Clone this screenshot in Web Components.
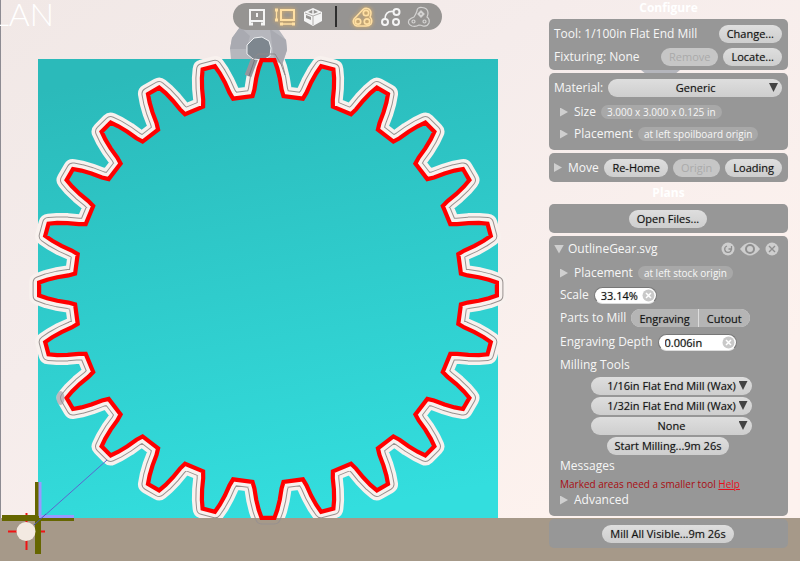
<!DOCTYPE html>
<html lang="en">
<head>
<meta charset="utf-8">
<title>Mill planner</title>
<style>
  html, body { margin: 0; min-height: 100%; }
  body { font: 12px/16px "Open Sans", "Noto Sans", sans-serif; background: #f5edea; color: #fff; }
</style>
</head>
<body>
<mill-app></mill-app>
<script>
const define = (name, html, setup) => {
  const template = document.createElement('template');
  template.innerHTML = html;
  customElements.define(name, class extends HTMLElement {
    connectedCallback() {
      if (this.shadowRoot) return;
      this.attachShadow({ mode: 'open' }).append(template.content.cloneNode(true));
      if (setup) setup(this, this.shadowRoot);
    }
  });
};

/* 24-tooth gear outline centred on the stock */
const gearPath = () => {
  const profile = [[-4.6, 193.5], [-3.9, 200], [-3.2, 211], [-2.4, 221], [-1.6, 229], [1.6, 229], [2.4, 221], [3.2, 211], [3.9, 200], [4.6, 193.5]];
  const points = [];
  for (let tooth = 0; tooth < 24; tooth++) {
    for (const [offset, radius] of profile) {
      const angle = (tooth * 15 + offset) * Math.PI / 180;
      points.push((268 + radius * Math.sin(angle)).toFixed(1) + ' ' + (289 - radius * Math.cos(angle)).toFixed(1));
    }
  }
  return 'M' + points.join('L') + 'Z';
};

define('mill-scene', `
<style>
  :host { display: block; min-width: 0; min-height: 0; }
  svg { display: block; width: 100%; height: 100%; }
</style>
<svg viewBox="0 0 800 561" preserveAspectRatio="xMinYMin slice" aria-label="Stock preview" role="img">
  <defs>
    <linearGradient id="wall" x1="0" y1="0" x2="1" y2="1">
      <stop offset="0" stop-color="#f1e8e6"/><stop offset=".35" stop-color="#f5eceb"/><stop offset=".8" stop-color="#fdf2ee"/><stop offset="1" stop-color="#fdf2ee"/>
    </linearGradient>
    <linearGradient id="stock" gradientUnits="userSpaceOnUse" x1="220" y1="59" x2="300" y2="518">
      <stop offset="0" stop-color="#2bbaba"/><stop offset="1" stop-color="#33dede"/>
    </linearGradient>
    <clipPath id="above"><rect width="800" height="518"/></clipPath>
    <clipPath id="below"><rect y="518" width="800" height="43"/></clipPath>
  </defs>
  <rect width="800" height="561" fill="url(#wall)"/>
  <rect y="518" width="800" height="43" fill="#a69989"/>
  <rect width="1" height="518" fill="#8d8b92"/>
  <path d="M641 70H680L674 75H647Z" fill="#b4b5bc"/>
  <rect x="38" y="59" width="460" height="459" fill="url(#stock)"/>
  <g fill="none" stroke-linejoin="round">
    <path class="gear" stroke="#f8f1ee" stroke-width="20" clip-path="url(#above)"/>
    <path class="gear" stroke="#98918f" stroke-width="13"/>
    <path class="gear" stroke="#f8f1ee" stroke-width="11" clip-path="url(#above)"/>
    <path class="gear" stroke="#a69989" stroke-width="11" clip-path="url(#below)"/>
  </g>
  <path d="M240 27H277L286 40L287 50L282 65L274 59H231L230 49L232 38Z" fill="#b6b7bd"/>
  <path d="M270 29L286 40L287 50L282 65L274 59Z" fill="#a9aab1"/>
  <path d="M240 27L232 38L230 49H246L250 36Z" fill="#a9aab1"/>
  <path d="M256 55L248 76" stroke="#96969d" stroke-width="7"/>
  <path d="M256 56L249 76" stroke="#74777e" stroke-width="1"/>
  <path d="M254 38L262 37L269 41L271 48L270 56L263 60L253 59L247 54V45Z" fill="#7e878f" stroke="#eef0f2" stroke-width="1"/>
  <path class="gear" fill="url(#stock)" stroke="#ff0000" stroke-width="4.2"/>
  <path d="M253 60L258 54H275L281 64L285 75" fill="none" stroke="#8c898b"/>
  <ellipse cx="60.500" cy="398" rx="4" ry="7" fill="#9a94a0" opacity=".6"/>
  <path d="M34 525L107 460" stroke="#5b67cf"/>
  <path d="M8 531.500H45M26.500 513V550" stroke="#f01414" stroke-width="2"/>
  <path d="M2 518H74M38 482V554" stroke="#666600" stroke-width="6"/>
  <path d="M40 482V516M39 516.500H74" stroke="#9999ff" stroke-width="3"/>
  <path d="M34 525L46 514" stroke="#4c55b8"/>
  <circle cx="26" cy="531.500" r="9.500" fill="#f3e9e1"/>
</svg>`, (host, root) => root.querySelectorAll('.gear').forEach(p => p.setAttribute('d', gearPath())));

define('mill-brand', `
<style>
  :host { display: flex; justify-content: flex-end; width: 54px; overflow: hidden; font: 300 32px/28px Lato, sans-serif; color: #fff; }
</style><span>LAN</span>`);

define('mill-toolbar', `
<style>
  :host { display: flex; align-items: center; height: 27px; width: 209px; box-sizing: border-box; padding: 0 11px 0 13px; border-radius: 14px; background: #969492; justify-content: space-between; }
  button { all: unset; display: flex; color: #f4f4f4; }
  .on { color: #ffe0a4; filter: drop-shadow(0 0 2px #f3b95a); }
  svg { display: block; fill: none; stroke: currentColor; stroke-width: 2; }
  hr { width: 2px; height: 21px; margin: 0 9px 0 6px; border: 0; background: #2d2d2d; }
</style>
<button aria-label="Machine view"><svg width="22" height="20" viewBox="0 0 22 20"><path d="M4 18V3H18V18M3 14H19" /><path d="M3 17H7M15 17H19" stroke-width="3"/><path d="M11 6V10" stroke-width="2"/></svg></button>
<button class="on" aria-label="Stock view"><svg width="24" height="20" viewBox="0 0 24 20"><path d="M8 3H21V13H8Z"/><path d="M3.500 3V13M8 17H21" stroke-width="1.300"/><g fill="currentColor" stroke="none"><rect x="2" y="1.500" width="3" height="3"/><rect x="2" y="11.500" width="3" height="3"/><rect x="7" y="15.500" width="3" height="3"/><rect x="19" y="15.500" width="3" height="3"/></g></svg></button>
<button aria-label="Perspective view"><svg width="22" height="20" viewBox="0 0 22 20"><path d="M11 1L20 5V14L11 19L2 14V5Z" fill="currentColor" stroke="none"/><path d="M3 6L11 9L19 6M11 9V18" stroke="#b0aeac" stroke-width="1"/><path d="M11 2.500L16 5L11 7L6 5ZM4 8L9 10V13L4 11Z" fill="#969492" stroke="none"/><path d="M11 2V7" stroke-width="1.500"/></svg></button>
<hr>
<button class="on" aria-label="Show toolpaths"><svg width="24" height="22" viewBox="0 0 24 22"><path d="M12 3.500A4.800 4.800 0 0 1 20 7Q20 9 19 11Q22 14 20 18Q18 20 15 20H6A4.500 4.500 0 0 1 3 13Z" stroke-width="1.500"/><g stroke-width="1.700"><circle cx="15" cy="7" r="2.700"/><circle cx="7" cy="15.500" r="2.700"/><circle cx="16" cy="15.500" r="2.700"/></g></svg></button>
<button aria-label="Show outlines"><svg width="22" height="22" viewBox="0 0 22 22"><path d="M13 5.500Q5 5 5 13" stroke-width="1.700"/><circle cx="16.500" cy="6" r="3"/><circle cx="5" cy="16" r="3"/><circle cx="16" cy="16" r="3"/></svg></button>
<button aria-label="Show cut areas"><svg width="24" height="22" viewBox="0 0 24 22" style="stroke-width:1.200;color:#d4d3d2"><path d="M10 5Q10 1 15 1.500Q21 2 21 7Q21 9 20 11Q23 13 22 17Q20 21 16 20Q14 19 12 19Q9 21 5 20Q0 18 2 14Q4 12 7 11Q9 8 10 5Z"/><circle cx="6.500" cy="15.500" r="1.500"/><circle cx="17.500" cy="15.500" r="1.500"/><path d="M14 5.500L16.500 8L14 10.500L11.500 8Z" style="stroke-width:2"/></svg></button>`);

define('panel-title', `
<style>:host { display: block; text-align: center; font-weight: 700; line-height: 16px; color: #fff; }</style><slot></slot>`);

define('side-panel', `
<style>
  :host { display: block; padding: 3px 6px 3px 5px; border-radius: 5px; background: #979797; }
</style><slot></slot>`);

define('panel-row', `
<style>
  :host { display: flex; align-items: center; gap: 5px; height: 23px; white-space: nowrap; color: #f6f6f6; }
  :host([size="s"]) { height: 16px; }
  :host([size="m"]) { height: 20px; }
  :host([size="n"]) { height: 22px; }
  :host([size="l"]) { height: 24px; }
  :host([size="xl"]) { height: 26px; }
  :host([indent]) { padding-left: 6px; }
  :host([center]) { justify-content: center; }
  :host([spread]) { justify-content: space-between; }
</style><slot></slot>`);

define('row-spacer', `<style>:host { flex: 1; margin-right: -5px; }</style>`);

define('pill-button', `
<style>
  :host { display: block; }
  button { display: block; box-sizing: border-box; height: 18px; padding: 0 8px; border: 0; border-radius: 9px; font: inherit; font-size: 11px; line-height: 18px; color: #111; text-shadow: 0 0 1px #888; background: linear-gradient(#dedede, #cecece); }
  button:disabled { color: #aaa; background: #c6c6c6; text-shadow: none; }
</style><button><slot></slot></button>`, (host, root) => { root.querySelector('button').disabled = host.hasAttribute('disabled'); });

define('disclosure-button', `
<style>
  :host { display: block; }
  button { all: unset; display: flex; align-items: center; gap: 6px; }
  i { width: 8px; height: 9px; background: #cfcfcf; clip-path: polygon(0 0, 100% 50%, 0 100%); }
  :host([open]) i { width: 10px; clip-path: polygon(0 0, 100% 0, 50% 100%); }
  :host([open]) button { gap: 4px; }
</style><button><i></i><slot></slot></button>`, (host, root) => root.querySelector('button').setAttribute('aria-expanded', host.hasAttribute('open')));

define('value-tag', `
<style>:host { display: block; height: 14px; padding: 0 6px; border-radius: 7px; background: #a8a8a8; font-size: 10px; line-height: 14px; color: #f6f6f6; }</style><slot></slot>`);

define('pill-select', `
<style>
  :host { display: flex; align-items: center; gap: 5px; width: 161px; }
  :host([label]) { width: 100%; }
  div { position: relative; flex: 1; }
  select { appearance: none; display: block; box-sizing: border-box; width: 100%; height: 18px; padding: 0 15px 0 16px; border: 0; border-radius: 9px; font: inherit; font-size: 11px; line-height: 18px; color: #111; text-shadow: 0 0 1px #888; text-align: center; text-align-last: center; background: linear-gradient(#dedede, #cecece); }
  div::after { content: ""; position: absolute; right: 4px; top: 4px; width: 9px; height: 9px; background: #444; clip-path: polygon(0 0, 100% 0, 50% 100%); pointer-events: none; }
</style><label for="s"></label><div><select id="s"><option></option></select></div>`, (host, root) => {
  const label = root.querySelector('label');
  if (host.hasAttribute('label')) label.textContent = host.getAttribute('label');
  else { label.remove(); root.querySelector('select').setAttribute('aria-label', 'Milling tool'); }
  root.querySelector('option').textContent = host.getAttribute('value');
});

define('clearable-field', `
<style>
  :host { display: flex; align-items: center; gap: 5px; }
  div { position: relative; width: 63px; }
  :host([wide]) div { width: 79px; }
  input { display: block; box-sizing: border-box; width: 100%; height: 17px; padding: 0 18px 0 6px; border: 1px solid #777; border-bottom-color: #ddd; border-radius: 9px; font: inherit; font-size: 11px; text-shadow: 0 0 1px #888; color: #111; background: #fff; }
  button { all: unset; position: absolute; right: 2px; top: 2px; }
  svg { display: block; }
</style><label for="f"></label><div><input id="f"><button aria-label="Reset"><svg width="13" height="13" viewBox="0 0 13 13"><circle cx="6.500" cy="6.500" r="6" fill="#c9c9c9"/><path d="M4 4L9 9M9 4L4 9" stroke="#fff" stroke-width="1.500"/></svg></button></div>`, (host, root) => {
  root.querySelector('label').textContent = host.getAttribute('label');
  root.querySelector('input').value = host.getAttribute('value');
});

define('segmented-control', `
<style>
  :host { display: flex; gap: 1px; border-radius: 9px; overflow: hidden; background: #ddd; font-size: 11px; }
  button { all: unset; box-sizing: border-box; height: 18px; padding: 0 8px; line-height: 17px; background: #b5b5b5; color: #111; text-shadow: 0 0 1px #777; }
</style><button aria-pressed="true">Engraving</button><button aria-pressed="true">Cutout</button>`);

define('plan-actions', `
<style>
  :host { display: flex; align-items: center; gap: 5px; padding-right: 3px; }
  button { all: unset; display: block; }
  svg { display: block; fill: #cecece; stroke: #8f8f8f; }
</style>
<button aria-label="Reload"><svg width="14" height="14" viewBox="0 0 14 14"><circle cx="7" cy="7" r="6.500" stroke="none"/><path d="M6 4A3.300 3.300 0 1 0 10.300 7.500M7.500 7H10.500V4" fill="none" stroke-width="1.300"/></svg></button>
<button aria-label="Visible"><svg width="20" height="14" viewBox="0 0 20 14"><path d="M0 7Q10-6 20 7Q10 20 0 7Z" stroke="none"/><circle cx="10" cy="7" r="4" stroke-width="2"/></svg></button>
<button aria-label="Remove"><svg width="14" height="14" viewBox="0 0 14 14"><circle cx="7" cy="7" r="6.500" stroke="none"/><path d="M4 4L10 10M10 4L4 10" stroke-width="1.400"/></svg></button>`);

define('plan-message', `
<style>
  :host { display: block; font-size: 10px; color: #a80d12; }
  a { color: #e60f1c; text-decoration: underline; }
</style><slot></slot> <a href="#help">Help</a>`);

define('side-bar', `
<style>
  :host { display: flex; flex-direction: column; gap: 3px; width: 239px; }
  .stock { padding-top: 2px; padding-bottom: 5px; }
  .tools { padding-bottom: 2px; }
  .plan { padding-top: 0; padding-bottom: 8px; }
</style>
<panel-title>Configure</panel-title>
<side-panel class="tools">
  <panel-row spread><span>Tool: 1/100in Flat End Mill</span><pill-button>Change...</pill-button></panel-row>
  <panel-row><span>Fixturing: None</span><row-spacer></row-spacer><pill-button disabled>Remove</pill-button><pill-button>Locate...</pill-button></panel-row>
</side-panel>
<side-panel class="stock">
  <panel-row size="xl"><pill-select label="Material:" value="Generic"></pill-select></panel-row>
  <panel-row size="n" indent><disclosure-button>Size</disclosure-button><value-tag>3.000 x 3.000 x 0.125 in</value-tag></panel-row>
  <panel-row size="n" indent><disclosure-button>Placement</disclosure-button><value-tag>at left spoilboard origin</value-tag></panel-row>
</side-panel>
<side-panel>
  <panel-row><disclosure-button>Move</disclosure-button><row-spacer></row-spacer><pill-button>Re-Home</pill-button><pill-button disabled>Origin</pill-button><pill-button>Loading</pill-button></panel-row>
</side-panel>
<panel-title>Plans</panel-title>
<side-panel><panel-row center><pill-button>Open Files...</pill-button></panel-row></side-panel>
<side-panel class="plan">
  <panel-row size="xl" spread><disclosure-button open>OutlineGear.svg</disclosure-button><plan-actions></plan-actions></panel-row>
  <panel-row size="n" indent><disclosure-button>Placement</disclosure-button><value-tag>at left stock origin</value-tag></panel-row>
  <panel-row size="n" indent><clearable-field label="Scale" value="33.14%"></clearable-field></panel-row>
  <panel-row size="l" indent><span>Parts to Mill</span><segmented-control></segmented-control></panel-row>
  <panel-row size="l" indent><clearable-field wide label="Engraving Depth" value="0.006in"></clearable-field></panel-row>
  <panel-row size="n" indent><span>Milling Tools</span></panel-row>
  <panel-row size="m" indent center><pill-select value="1/16in Flat End Mill (Wax)"></pill-select></panel-row>
  <panel-row size="m" indent center><pill-select value="1/32in Flat End Mill (Wax)"></pill-select></panel-row>
  <panel-row size="m" indent center><pill-select value="None"></pill-select></panel-row>
  <panel-row size="m" center><pill-button>Start Milling...9m 26s</pill-button></panel-row>
  <panel-row size="m" indent><span>Messages</span></panel-row>
  <panel-row size="s" indent><plan-message>Marked areas need a smaller tool</plan-message></panel-row>
  <panel-row size="s" indent><disclosure-button>Advanced</disclosure-button></panel-row>
</side-panel>
<side-panel><panel-row center><pill-button>Mill All Visible...9m 26s</pill-button></panel-row></side-panel>`);

define('mill-app', `
<style>
  :host { display: grid; grid-template-columns: minmax(0, 1fr) auto; min-height: 100vh; overflow: hidden; }
  mill-scene { grid-area: 1 / 1 / 2 / 3; height: 0; min-height: 100%; }
  header { grid-area: 1 / 1 / 2 / 2; z-index: 1; display: flex; align-items: flex-start; align-self: start; }
  nav { flex: 1; display: flex; justify-content: center; padding: 3px 0 0 72px; }
  side-bar { grid-area: 1 / 2 / 2 / 3; z-index: 1; margin-right: 12px; }
</style>
<mill-scene></mill-scene>
<header><mill-brand></mill-brand><nav><mill-toolbar></mill-toolbar></nav></header>
<side-bar></side-bar>`);
</script>
</body>
</html>
